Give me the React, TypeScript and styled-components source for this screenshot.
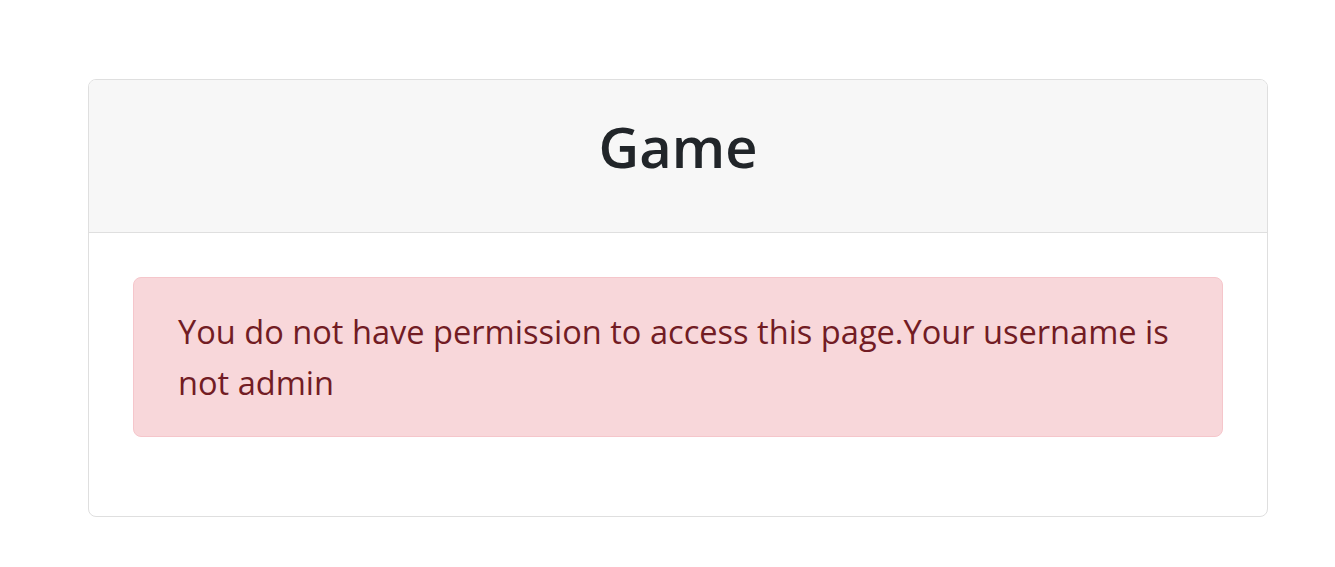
import React from "react";
import styled, { createGlobalStyle } from "styled-components";

const Global = createGlobalStyle`
  html, body { margin: 0; padding: 0; background: #ffffff; }
  body { font-family: "Open Sans", "Noto Sans", sans-serif; color: #212529; }
`;

const Page = styled.div`
  padding: 79px 67px 0 88px;
`;

const Card = styled.div`
  display: flex;
  flex-direction: column;
  border: 1px solid #dfdfdf;
  border-radius: 8px;
  background: #ffffff;
  overflow: hidden;
`;

const CardHeader = styled.div`
  display: flex;
  align-items: center;
  justify-content: center;
  height: 152px;
  background: #f7f7f7;
  border-bottom: 1px solid #dfdfdf;
`;

const Title = styled.h3`
  margin: 0 0 18px;
  font-size: 56px;
  font-weight: 600;
  line-height: 1.2;
  color: #212529;
`;

const CardBody = styled.div`
  padding: 44px 44px 79px;
`;

const Alert = styled.div`
  padding: 28px 44px;
  background: #f8d7da;
  border: 1px solid #f5c6cb;
  border-radius: 8px;
  color: #721c24;
  font-size: 32.6px;
  line-height: 51px;
`;

export default function App() {
  return (
    <>
      <Global />
      <Page>
        <Card>
          <CardHeader>
            <Title>Game</Title>
          </CardHeader>
          <CardBody>
            <Alert>
              You do not have permission to access this page.Your username is not admin
            </Alert>
          </CardBody>
        </Card>
      </Page>
    </>
  );
}
